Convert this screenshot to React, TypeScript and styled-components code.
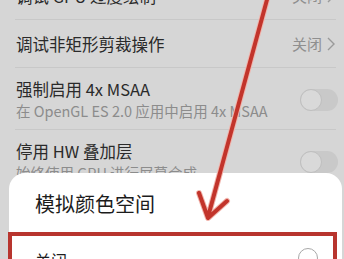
import React from "react";
import styled, { createGlobalStyle } from "styled-components";

const GlobalStyle = createGlobalStyle`
  html, body { margin: 0; padding: 0; background: #d6d6d6; }
  body { font-family: "Noto Sans CJK SC", "Noto Sans", sans-serif; }
`;

const Screen = styled.div`
  position: relative;
  width: 344px;
  height: 259px;
  overflow: hidden;
  background: #d6d6d6;
`;

const List = styled.div`
  display: flex;
  flex-direction: column;
  margin-top: -28px;
`;

const Row = styled.div<{ $tall?: boolean }>`
  display: flex;
  align-items: center;
  justify-content: space-between;
  margin: 0 8px 0 15px;
  padding: ${(p) => (p.$tall ? "10px 0 7px 1px" : "0 0 0 1px")};
  min-height: ${(p) => (p.$tall ? "auto" : "47px")};
  border-bottom: 1px solid #c8c8c8;
`;

const TextCol = styled.div`
  display: flex;
  flex-direction: column;
`;

const Title = styled.div`
  font-size: 16.5px;
  line-height: 22px;
  color: #2a2a2a;
  white-space: nowrap;
`;

const Sub = styled.div`
  font-size: 14.5px;
  line-height: 22px;
  color: #8c8c8c;
  white-space: nowrap;
`;

const Value = styled.div`
  display: flex;
  align-items: center;
  gap: 5px;
  font-size: 15px;
  color: #8f8f8f;
  margin-right: 1px;
`;

const Toggle = styled.div`
  position: relative;
  width: 38px;
  height: 22px;
  border-radius: 11px;
  background: #c9c9c9;
  margin-right: -2px;
  &::after {
    content: "";
    position: absolute;
    left: 0;
    top: 0;
    width: 20px;
    height: 20px;
    border-radius: 50%;
    background: #d9d9d9;
    border: 1px solid #bfbfbf;
  }
`;

const Sheet = styled.div`
  position: absolute;
  top: 173px;
  left: 9px;
  right: 2px;
  bottom: -30px;
  background: #ffffff;
  border-radius: 16px 16px 0 0;
  display: flex;
  flex-direction: column;
`;

const SheetTitle = styled.div`
  font-size: 20px;
  line-height: 28px;
  color: #1c1c1c;
  padding: 17px 0 0 26px;
`;

const Highlight = styled.div`
  margin: 14px 5px 0 -1px;
  border: 4px solid #b8352e;
  border-bottom: none;
  flex: 1;
`;

const Option = styled.div`
  display: flex;
  align-items: flex-start;
  justify-content: space-between;
  padding: 13px 15px 0 23px;
`;

const OptionText = styled.div`
  font-size: 16px;
  line-height: 22px;
  color: #1e1e1e;
`;

const Radio = styled.div`
  width: 18px;
  height: 18px;
  border-radius: 50%;
  border: 1.5px solid #a8a8a8;
  margin-top: -1px;
`;

const Overlay = styled.svg`
  position: absolute;
  inset: 0;
  pointer-events: none;
`;

const Chevron = () => (
  <svg width="8" height="14" viewBox="0 0 8 14">
    <polyline points="1,1 7,7 1,13" fill="none" stroke="#9a9a9a" strokeWidth="1.4" />
  </svg>
);

export default function App() {
  return (
    <>
      <GlobalStyle />
      <Screen>
        <List>
          <Row>
            <Title>调试 GPU 过度绘制</Title>
            <Value>
              关闭 <Chevron />
            </Value>
          </Row>
          <Row>
            <Title>调试非矩形剪裁操作</Title>
            <Value>
              关闭 <Chevron />
            </Value>
          </Row>
          <Row $tall>
            <TextCol>
              <Title>强制启用 4x MSAA</Title>
              <Sub>在 OpenGL ES 2.0 应用中启用 4x MSAA</Sub>
            </TextCol>
            <Toggle />
          </Row>
          <Row $tall>
            <TextCol>
              <Title>停用 HW 叠加层</Title>
              <Sub>始终使用 GPU 进行屏幕合成</Sub>
            </TextCol>
            <Toggle />
          </Row>
        </List>
        <Sheet>
          <SheetTitle>模拟颜色空间</SheetTitle>
          <Highlight>
            <Option>
              <OptionText>关闭</OptionText>
              <Radio />
            </Option>
          </Highlight>
        </Sheet>
        <Overlay width="344" height="259" viewBox="0 0 344 259">
          <g fill="none" strokeLinecap="round" strokeLinejoin="round">
            <path d="M268,-4 L208,217 M199,193 L208,218 L227,201" stroke="#f1b4ac" strokeWidth="6" />
            <path d="M268,-4 L208,217 M199,193 L208,218 L227,201" stroke="#c2342b" strokeWidth="4" />
          </g>
        </Overlay>
      </Screen>
    </>
  );
}
